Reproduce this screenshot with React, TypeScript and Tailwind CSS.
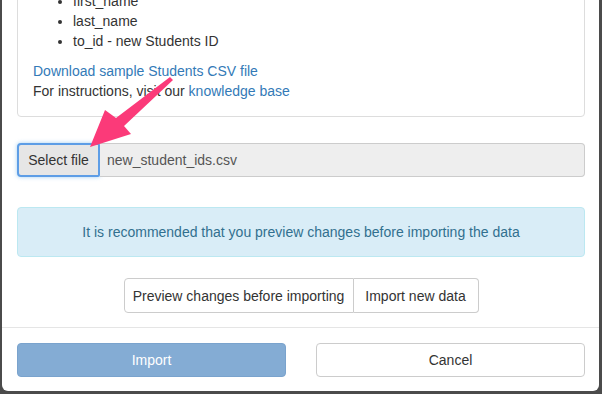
import React from "react";

const font = { fontFamily: '"Liberation Sans", Arial, sans-serif' };

function Arrow() {
  return (
    <svg
      className="absolute left-0 top-0 pointer-events-none"
      width="200"
      height="160"
      viewBox="0 0 200 160"
    >
      <polygon
        points="90,147 105,110 116,118 170,77 173,80 124,126 131,134"
        fill="#fb3a79"
      />
    </svg>
  );
}

export default function App() {
  return (
    <div className="w-[602px] h-[394px] overflow-hidden bg-[#4b4b4b] relative" style={font}>
      <div className="ml-[2px] w-[597px] h-[391px] bg-white rounded-b-[6px] overflow-hidden flex flex-col text-[14px] leading-[20px] text-[#333]">
        {/* body */}
        <div className="pl-[15px] pr-[14px] pb-[14px]">
          <div className="-mt-[25px] border border-[#ddd] rounded-[4px] p-[15px] pb-[15px]">
            <ul className="list-disc pl-[40px] mb-[10px]">
              <li>first_name</li>
              <li>last_name</li>
              <li>to_id - new Students ID</li>
            </ul>
            <a className="block text-[#337ab7]">Download sample Students CSV file</a>
            <p>
              For instructions, visit our <a className="text-[#337ab7]">knowledge base</a>
            </p>
          </div>

          <div className="mt-[26px] flex h-[34px]">
            <button className="w-[83px] shrink-0 bg-[#e6e6e6] border-2 border-[#5d9de6] rounded-l-[4px] rounded-r-[2px] text-[#333] shadow-[0_0_4px_rgba(102,175,233,0.6)]">
              Select file
            </button>
            <div className="flex-1 bg-[#eee] border border-l-0 border-[#ccc] rounded-r-[4px] flex items-center pl-[7px] text-[#555]">
              new_student_ids.csv
            </div>
          </div>

          <div className="mt-[30px] bg-[#d9edf7] border border-[#bce8f1] rounded-[4px] h-[50px] flex items-center justify-center text-[#31708f]">
            It is recommended that you preview changes before importing the data
          </div>

          <div className="mt-[21px] flex justify-center">
            <div className="flex h-[35px]">
              <button className="w-[230px] bg-white border border-[#ccc] rounded-l-[4px] text-[#333]">
                Preview changes before importing
              </button>
              <button className="w-[125px] bg-white border border-l-0 border-[#ccc] rounded-r-[4px] text-[#333]">
                Import new data
              </button>
            </div>
          </div>
        </div>

        {/* footer */}
        <div className="border-t border-[#e5e5e5] pl-[15px] pr-[14px] pt-[15px] grid grid-cols-2 gap-[30px]">
          <button className="h-[34px] bg-[#84acd4] border border-[#7aa3cd] rounded-[4px] text-white">
            Import
          </button>
          <button className="h-[34px] bg-white border border-[#ccc] rounded-[4px] text-[#333]">
            Cancel
          </button>
        </div>
      </div>
      <Arrow />
    </div>
  );
}
